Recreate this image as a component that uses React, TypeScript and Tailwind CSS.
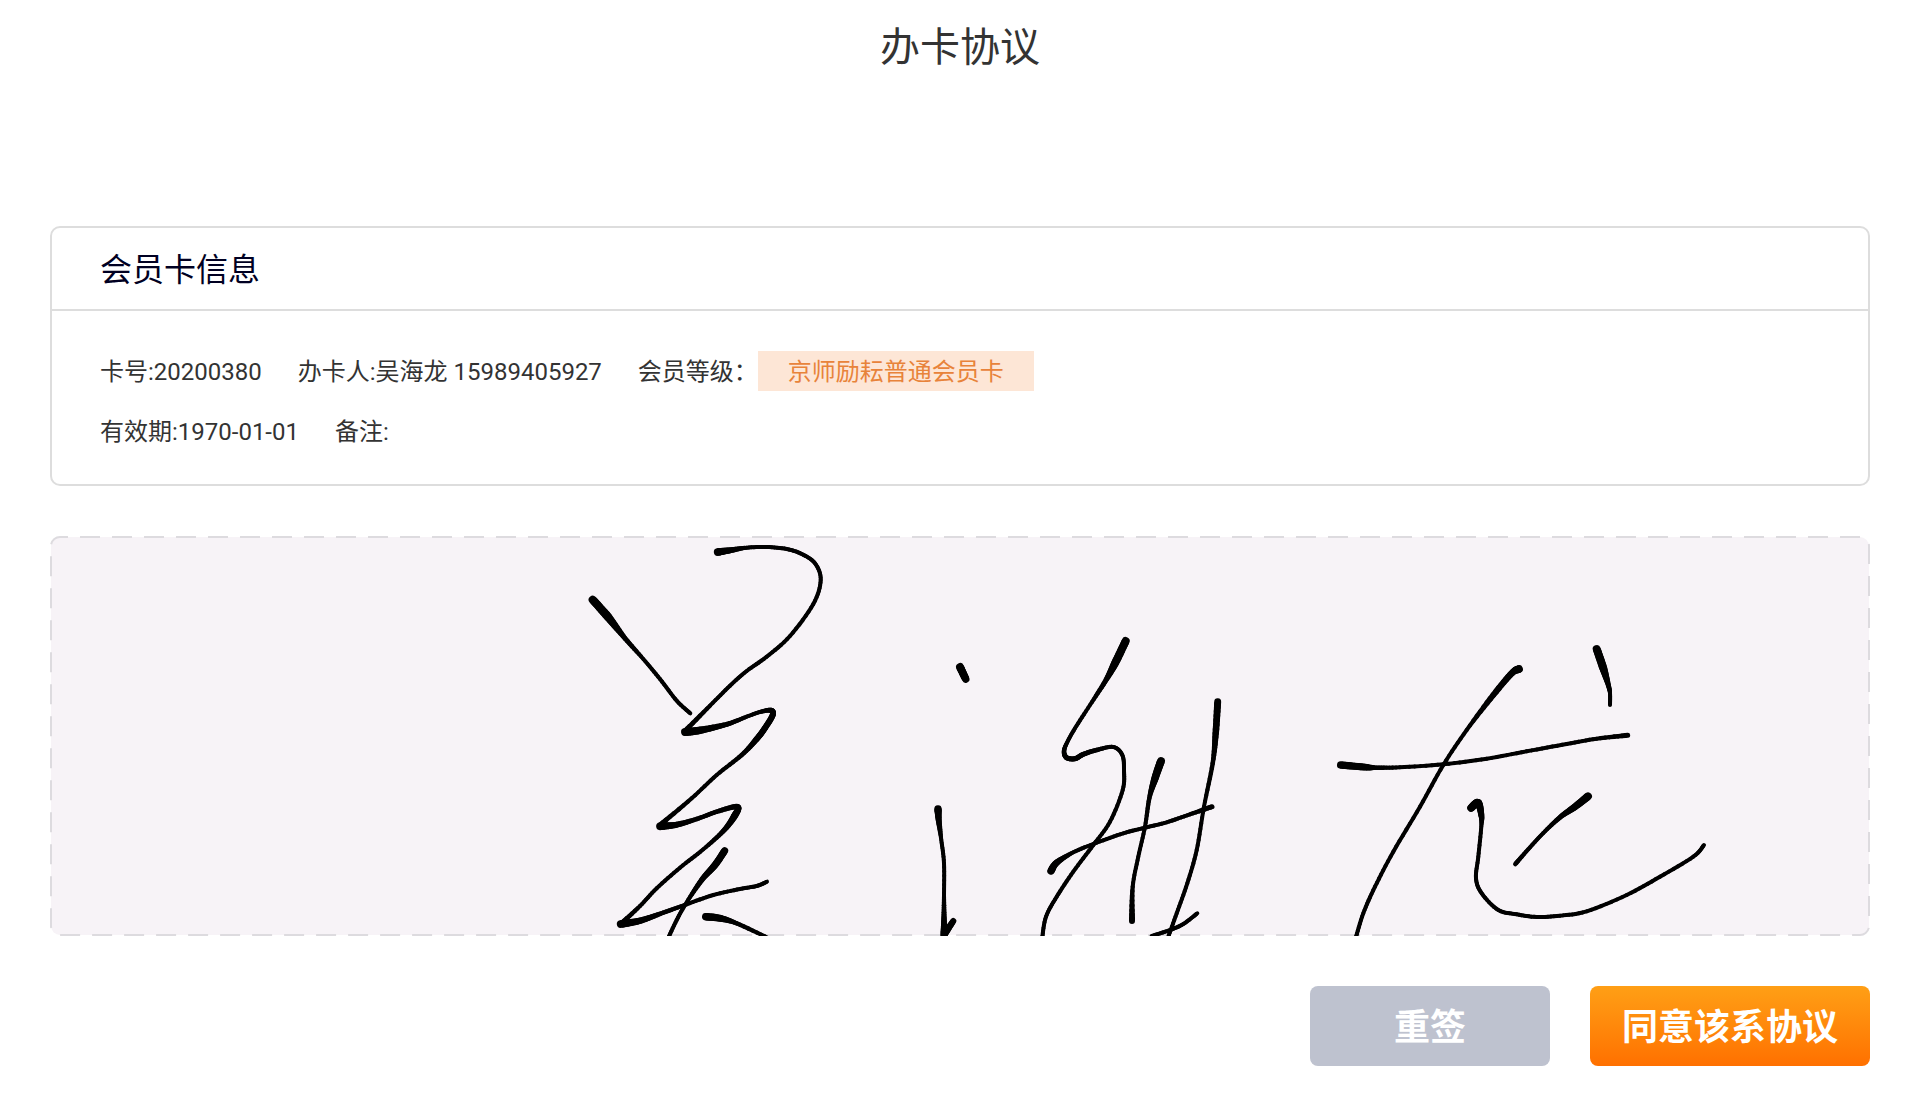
import { useMemo } from 'react'

// x, y, pen width
type Point = [number, number, number]

const strokes: Point[][] = [
  // 吴
  [[592.7, 599.7, 8], [608.3, 617.3, 8.5], [625, 638.3, 5], [643.3, 659, 4], [660, 679, 4], [676.7, 700.7, 4], [690.3, 713.3, 4]],
  [[717.7, 552, 8], [730, 550.3, 6], [746.7, 547.7, 4], [766.7, 547, 4], [786.7, 549, 4], [801.7, 554, 4], [815, 563.3, 4], [820.7, 580, 4], [813.3, 604, 4], [790, 636, 4], [766.7, 656.7, 4], [746.7, 671, 4], [730, 685.7, 4], [710, 705.7, 4], [685, 731, 5]],
  [[685, 732, 8], [700, 730.3, 7.5], [726.7, 724.3, 5], [746.7, 716.7, 4], [760, 712, 4], [770.7, 710.3, 5], [772.7, 715, 6], [765, 728, 6], [756.7, 739, 6], [741.7, 755, 4.5], [716.7, 775, 4], [691.7, 798.3, 4], [660, 825, 5]],
  [[660, 826.3, 8], [676.7, 824.7, 6], [696.7, 819, 4.5], [716.7, 811.7, 4.5], [737.3, 806.7, 5.5], [734.3, 816.3, 7], [723.3, 831, 5], [703.3, 849.3, 4], [680, 867.7, 4], [656.7, 888.3, 4], [640, 906, 4], [620.7, 924, 5]],
  [[620.7, 924, 8], [640, 920.7, 6.5], [663.3, 912.7, 4.5], [686.7, 904.3, 4], [713.3, 895, 4], [740, 889, 4], [756.7, 886, 4], [767, 881.7, 4]],
  [[724.7, 850.7, 7], [715, 865, 7], [701.7, 880, 5.5], [686.7, 902.3, 4], [676.7, 920, 4], [667.3, 940, 4]],
  [[705.7, 916.7, 7.5], [720, 918.3, 7], [736.7, 923.3, 4.5], [766.7, 937.3, 4]],
  // 海
  [[960, 667, 8], [965.7, 679, 7.5]],
  [[938, 809, 7.5], [938.7, 820, 6], [941.3, 840, 4], [944, 863.3, 4], [944, 896.7, 4], [944, 916.7, 5], [944, 934, 7]],
  [[944, 935, 7], [953.3, 921, 6]],
  [[1125.7, 641, 8], [1115, 663.3, 8], [1105, 681.7, 5], [1090, 705, 4], [1075, 728.3, 4], [1066.7, 743.3, 4], [1064, 751.7, 4.5], [1066.7, 757.7, 5], [1075, 758.7, 5], [1083.3, 754.3, 5], [1096.7, 750, 4.5], [1113.3, 747, 4], [1122.3, 755, 4], [1124, 770, 4], [1122.7, 790, 4], [1110, 821.7, 4], [1093.3, 845, 4], [1073.3, 871.7, 4], [1056.7, 896.7, 4], [1046, 916.7, 4], [1042.3, 937, 4]],
  [[1051, 871, 7.5], [1056.7, 862.7, 6.5], [1073.3, 852.3, 4], [1096.7, 842.7, 4], [1123.3, 833.3, 4], [1146.7, 827.3, 4], [1166.7, 822.3, 4], [1190, 814.3, 4], [1212, 806.7, 5]],
  [[1161, 761, 8], [1155, 778.3, 7.5], [1149.3, 798.3, 4.5], [1145, 826.7, 4], [1138.3, 856.7, 4], [1132.7, 886.7, 4], [1132, 921, 6]],
  [[1217.7, 701.7, 7], [1215.7, 733.3, 6.5], [1212.7, 763.3, 4.5], [1204, 806.7, 4], [1196.7, 850, 4], [1187.3, 883.3, 4], [1176.7, 913.3, 4], [1168.3, 936.7, 4]],
  [[1151.7, 936, 4], [1170, 930, 4], [1183.3, 924, 4], [1197.3, 913.3, 4]],
  // 龙
  [[1519, 669, 8], [1511.7, 673.3, 6.5], [1493.3, 695, 6], [1466.7, 730, 4], [1443.3, 765, 4], [1420, 806.7, 4], [1393.3, 851.7, 4], [1375, 886.7, 4], [1363.3, 913.3, 4], [1355.7, 938, 4]],
  [[1340.7, 765, 7.5], [1363.3, 767, 7], [1376.7, 767.7, 4.5], [1400, 767.3, 4], [1443.3, 764.3, 4], [1486.7, 758.7, 4], [1526.7, 751.3, 4], [1566.7, 744, 4], [1596.7, 738.7, 4], [1627.7, 735.3, 5]],
  [[1596.7, 649, 8], [1603.3, 668.3, 8], [1608.3, 685, 5], [1610, 693.3, 4], [1610, 705, 4]],
  [[1471, 808, 7.5], [1478, 803, 8], [1481.3, 815, 6], [1481.3, 826.7, 4], [1478.3, 856.7, 4], [1476, 878.3, 4], [1481.7, 893.3, 4], [1498.3, 910, 4], [1516.7, 914.3, 4], [1536.7, 917, 4], [1560, 915.7, 4], [1586.7, 911.3, 4], [1626.7, 895, 4], [1660, 876.7, 4], [1693.3, 856.7, 4], [1704, 845, 4]],
  [[1588, 796.3, 8], [1575, 806.7, 7], [1560, 817.3, 5], [1543.3, 833, 4], [1530, 847.3, 4], [1515.3, 864, 4.5]]
]

const STEPS = 8

// Catmull-Rom through the recorded points, width interpolated linearly
function smooth(points: Point[]): Point[] {
  const out: Point[] = [points[0]]
  for (let i = 0; i < points.length - 1; i++) {
    const p0 = points[Math.max(i - 1, 0)]
    const p1 = points[i]
    const p2 = points[i + 1]
    const p3 = points[Math.min(i + 2, points.length - 1)]
    for (let s = 1; s <= STEPS; s++) {
      const t = s / STEPS
      const at = (k: 0 | 1) =>
        0.5 * (2 * p1[k] + (p2[k] - p0[k]) * t + (2 * p0[k] - 5 * p1[k] + 4 * p2[k] - p3[k]) * t * t + (3 * p1[k] - p0[k] - 3 * p2[k] + p3[k]) * t * t * t)
      out.push([at(0), at(1), p1[2] + (p2[2] - p1[2]) * t])
    }
  }
  return out
}

function SignaturePad() {
  const lines = useMemo(() => strokes.map(smooth), [])

  return (
    <div className="relative mt-[50px] h-[400px] overflow-hidden">
      <svg className="absolute inset-0 h-full w-full" aria-hidden="true">
        <rect
          x="1"
          y="1"
          rx="9"
          className="h-[calc(100%-2px)] w-[calc(100%-2px)] fill-[#f7f3f7] stroke-[#dddbdf]"
          strokeWidth="2"
          strokeDasharray="20 12"
          strokeDashoffset="12"
        />
      </svg>
      <svg viewBox="50 536 1820 400" className="relative h-full w-full" role="img" aria-label="吴海龙" stroke="#000" strokeLinecap="round">
        {lines.map((line, i) => (
          <g key={i}>
            {line.slice(1).map(([x, y, w], j) => (
              <line key={j} x1={line[j][0]} y1={line[j][1]} x2={x} y2={y} strokeWidth={w} />
            ))}
          </g>
        ))}
      </svg>
    </div>
  )
}

export default function App() {
  return (
    <main className="min-h-screen bg-white px-[50px] pb-[50px] font-[Roboto,'Noto_Sans_CJK_SC',sans-serif] text-[#333]">
      <h1 className="pt-[18px] text-center text-[40px] leading-[60px]">办卡协议</h1>

      <section className="mt-[148px] rounded-[10px] border-2 border-[#ddd]">
        <h2 className="border-b-2 border-[#ddd] px-12 pt-[21px] pb-[18px] text-[32px] leading-[42px] text-[#000022]">会员卡信息</h2>
        <div className="flex flex-col gap-[18px] px-12 pt-10 pb-[31px] text-2xl leading-[42px]">
          <div className="flex flex-wrap gap-x-9">
            <p>卡号:20200380</p>
            <p>办卡人:吴海龙 15989405927</p>
            <p className="flex">
              会员等级：
              <span className="h-10 bg-[#fde6d6] px-[30px] text-[#e8833a]">京师励耘普通会员卡</span>
            </p>
          </div>
          <div className="flex flex-wrap gap-x-9">
            <p>有效期:1970-01-01</p>
            <p>备注:</p>
          </div>
        </div>
      </section>

      <SignaturePad />

      <div className="mt-[50px] flex justify-end gap-10 text-4xl font-bold text-white">
        <button type="button" className="h-20 w-60 rounded-lg bg-[#bec2cf] pt-1">重签</button>
        <button type="button" className="h-20 w-[280px] rounded-lg bg-linear-to-b from-[#ff9f15] to-[#ff7000] pt-1">同意该系协议</button>
      </div>
    </main>
  )
}
